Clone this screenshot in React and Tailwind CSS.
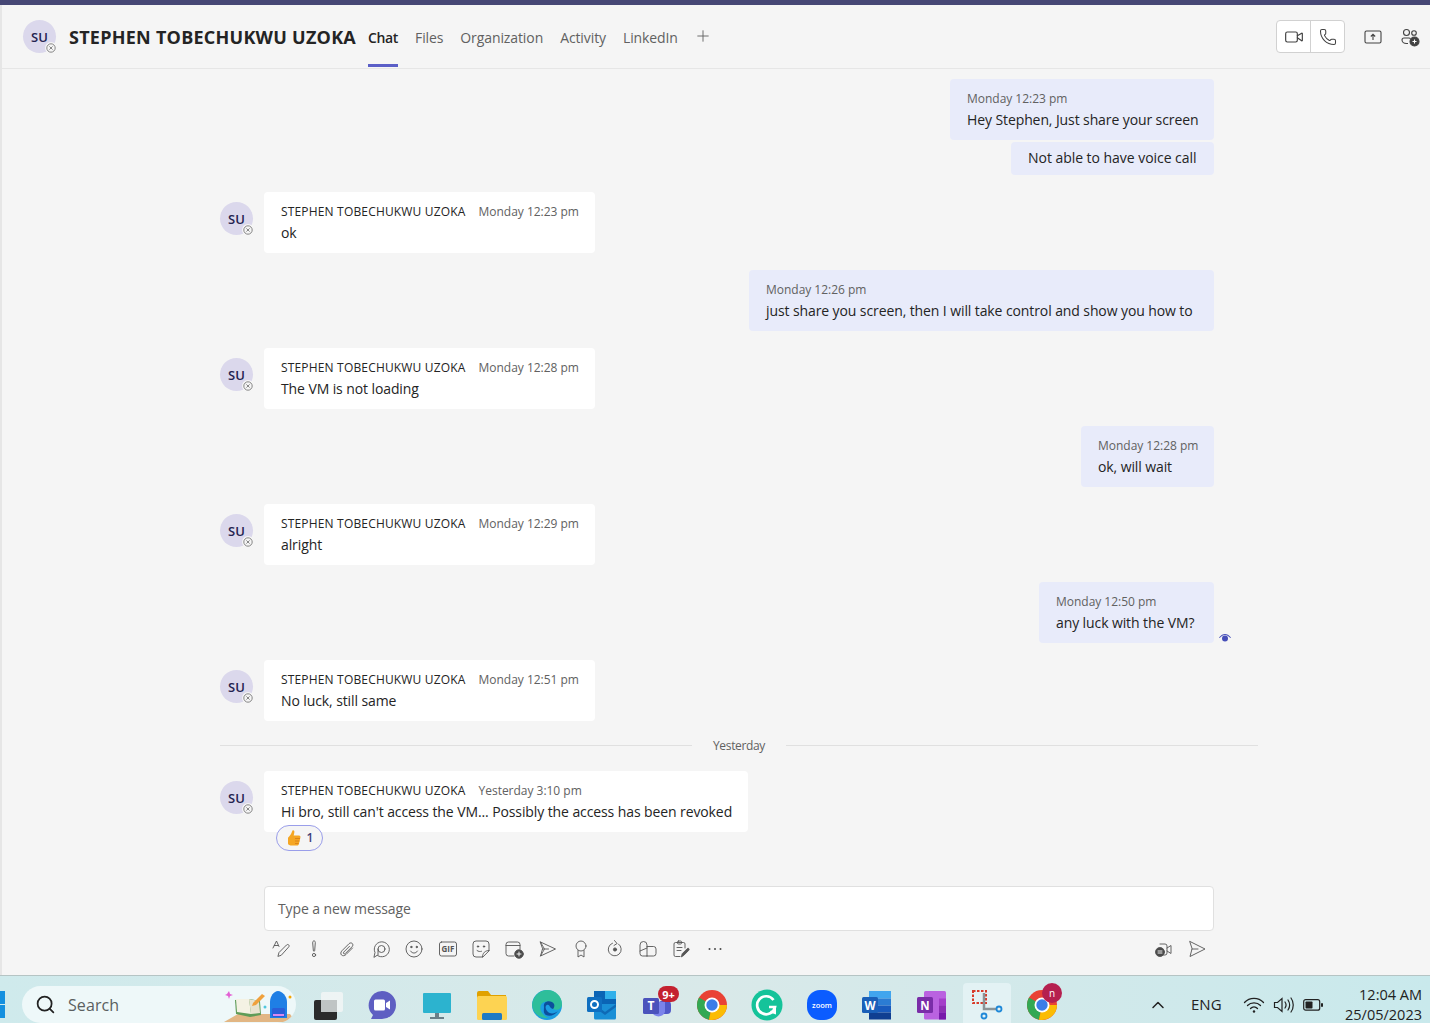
import React from "react";
import { Plus, Search, ChevronUp, Video, Phone } from "lucide-react";

const FONT = "font-['Open_Sans','Noto_Sans',sans-serif]";

const chatLog = [
  { me: true, width: "w-[264px]", time: "Monday 12:23 pm", text: "Hey Stephen, Just share your screen", extra: "Not able to have voice call" },
  { time: "Monday 12:23 pm", text: "ok" },
  { me: true, width: "w-[465px]", time: "Monday 12:26 pm", text: "just share you screen, then I will take control and show you how to" },
  { time: "Monday 12:28 pm", text: "The VM is not loading" },
  { me: true, width: "w-[133px]", time: "Monday 12:28 pm", text: "ok, will wait" },
  { time: "Monday 12:29 pm", text: "alright" },
  { me: true, width: "w-[175px]", time: "Monday 12:50 pm", text: "any luck with the VM?", seen: true },
  { time: "Monday 12:51 pm", text: "No luck, still same" },
];

// little wrapper so all the outline icons share the same stroke
function Ico({ size = 20, children, className = "" }) {
  return (
    <svg width={size} height={size} viewBox="0 0 20 20" fill="none" stroke="#555" strokeWidth="0.9" strokeLinecap="round" strokeLinejoin="round" className={className}>
      {children}
    </svg>
  );
}

function Avatar() {
  return (
    <div className="relative flex h-[33px] w-[33px] shrink-0 items-center justify-center rounded-full bg-[#dbd8ec] pt-[2px] text-[13px] font-semibold text-[#252350]">
      SU
      <span className="absolute -bottom-[1px] -right-[1px] flex h-[12px] w-[12px] items-center justify-center rounded-full bg-[#f5f5f5]">
        <svg width="10" height="10" viewBox="0 0 10 10" fill="none" stroke="#7a7a7a" strokeWidth="0.9">
          <circle cx="5" cy="5" r="4.2" />
          <path d="M3.4 3.4l3.2 3.2M6.6 3.4l-3.2 3.2" />
        </svg>
      </span>
    </div>
  );
}

function Meta({ time }) {
  return <div className="whitespace-nowrap text-[12px] leading-[20px] tracking-[-0.02px] text-[#616161]">{time}</div>;
}

function MineMessage({ msg }) {
  return (
    <div className="flex flex-col items-end gap-[2px] pr-[44px]">
      <div className={`relative rounded-[4px] bg-[#e8ebfa] pl-[17px] pt-[10px] pb-[9px] ${msg.width}`}>
        <Meta time={msg.time} />
        <div className="whitespace-nowrap text-[14px] leading-[22px] tracking-[-0.1px] text-[#242424]">{msg.text}</div>
        {msg.seen && (
          <svg width="14" height="10" viewBox="0 0 14 10" className="absolute -right-[18px] bottom-0" fill="#464eb8">
            <path d="M1 4.500C3 2 5 1 7 1s4 1 6 3.500l-.7.5C10.500 3 8.800 2 7 2S3.500 3 1.700 5z" />
            <circle cx="7" cy="5.500" r="3" />
          </svg>
        )}
      </div>
      {msg.extra && (
        <div className="w-[203px] rounded-[4px] bg-[#e8ebfa] pl-[17px] pt-[4px] pb-[6px] text-[14px] leading-[23px] tracking-[-0.04px] text-[#242424]">{msg.extra}</div>
      )}
    </div>
  );
}

function TheirMessage({ msg, reaction }) {
  return (
    <div className="flex gap-[11px]">
      <div className="pt-[10px]">
        <Avatar />
      </div>
      <div className="relative rounded-[4px] bg-white pl-[17px] pr-[16px] pt-[10px] pb-[9px]">
        <div className="flex gap-[13px]">
          <div className="whitespace-nowrap text-[12px] font-medium leading-[20px] tracking-[0.17px] text-[#242424]">STEPHEN TOBECHUKWU UZOKA</div>
          <Meta time={msg.time} />
        </div>
        <div className="whitespace-nowrap text-[14px] leading-[22px] tracking-[-0.1px] text-[#242424]">{msg.text}</div>
        {reaction && (
          <div className="absolute -bottom-[19px] left-[12px] flex h-[26px] w-[47px] items-center justify-center gap-[5px] rounded-full border border-[#9a9eea] bg-[#f5f5f5]">
            <svg width="16" height="18" viewBox="0 0 16 18">
              <path d="M6.500 1.500c1.500-.6 2.200.8 1.800 2.300L7.700 6.500h5.300c1.200 0 1.700 1 1.400 2l-1.500 6.500c-.3 1-1 1.500-2 1.500H6c-2 0-4-.5-4-2V9c0-1 2-2 3-4z" fill="#f5a623" />
              <path d="M9 9.500h5M9 12h4.500M9 14.500h3.500" stroke="#d97f1a" strokeWidth="0.9" />
            </svg>
            <span className="text-[12px] font-semibold text-[#3d3e78]">1</span>
          </div>
        )}
      </div>
    </div>
  );
}

function ComposeTools() {
  const tools = [
    <Ico key="f"><path d="M2 9L5.500 2 8 7.500M3.300 6.500h3.500" /><path d="M7 17l1-3.500 7.500-7.500c.7-.7 1.800-.7 2.300 0s.4 1.500-.3 2.200L10.500 16z" /></Ico>,
    <Ico key="i"><path d="M8.700 3.500c0-1 .6-1.700 1.300-1.700s1.300.7 1.300 1.700L10.700 11.500c0 .5-.3.800-.7.800s-.7-.3-.7-.8z" /><circle cx="10" cy="16" r="1.600" /></Ico>,
    <Ico key="a"><path d="M15.500 9l-6.500 6.500c-1.500 1.500-3.500 1.500-4.500.5s-1-2.800.5-4.300l7-7c1-1 2.500-1 3.300-.2s.8 2.200-.2 3.200l-6.800 6.800c-.5.500-1.200.500-1.600.1s-.4-1.100.1-1.600l5.700-5.700" /></Ico>,
    <Ico key="l"><path d="M3 18l1-4.500A7.500 7.500 0 1 1 6.500 16.500z" /><circle cx="10.500" cy="10" r="3.500" /><path d="M7 10v6" /></Ico>,
    <Ico key="e"><circle cx="10" cy="10" r="8" /><circle cx="7.300" cy="8" r="0.7" fill="#555" /><circle cx="12.700" cy="8" r="0.7" fill="#555" /><path d="M6.500 12c1 1.500 2.200 2 3.500 2s2.500-.5 3.500-2" /></Ico>,
    <Ico key="g">
      <rect x="1.500" y="3" width="17" height="14" rx="2" />
      <text x="10" y="13" textAnchor="middle" fontSize="8" fontWeight="700" fill="#555" stroke="none" fontFamily="Open Sans">GIF</text>
    </Ico>,
    <Ico key="s"><path d="M11.500 18H5a3 3 0 0 1-3-3V5a3 3 0 0 1 3-3h10a3 3 0 0 1 3 3v6.500z" /><path d="M11.500 18c0-4 2.500-6.500 6.500-6.500" /><circle cx="7" cy="7.500" r="0.7" fill="#555" /><circle cx="13" cy="7.500" r="0.7" fill="#555" /><path d="M6 11.500c1.500 1.200 3 1.200 4.500.8" /></Ico>,
    <Ico key="c">
      <path d="M10 17H4.500A2.500 2.500 0 0 1 2 14.500v-9A2.500 2.500 0 0 1 4.500 3h9A2.500 2.500 0 0 1 16 5.500V10M2 6.500h14" />
      <circle cx="15" cy="15" r="4.300" fill="#4a4a4a" />
      <path d="M15 13v4M13 15h4" stroke="#fff" />
    </Ico>,
    <Ico key="m"><path d="M2.500 3l15 7-15 7 2-7zM4.500 10h6" /><path d="M2.500 3l4 7-4 7" strokeWidth="0.8" /></Ico>,
    <Ico key="p"><circle cx="10" cy="7" r="5" /><path d="M7 11.500V18l3-2 3 2v-6.500" /></Ico>,
    <Ico key="r"><path d="M13.500 5A6.500 6.500 0 1 1 7.500 4.200" /><path d="M9.500 1.500L12 4.500 9 6.500" /><circle cx="10" cy="10.500" r="1.600" fill="#555" /></Ico>,
    <Ico key="o"><path d="M9 17H4.500A2.500 2.500 0 0 1 2 14.500V6a3.500 3.500 0 0 1 7 0v11M9 7.500h6.500A2.500 2.500 0 0 1 18 10v4.500a2.500 2.500 0 0 1-2.500 2.500H9" /><path d="M2 12l7-3" /></Ico>,
    <Ico key="u"><path d="M14 9V5a1.500 1.500 0 0 0-1.500-1.500h-8A1.500 1.500 0 0 0 3 5v11a1.500 1.500 0 0 0 1.500 1.500H9" /><rect x="6.500" y="2" width="4" height="3" rx="1" /><path d="M6 8.500h5M6 11.500h4" /><path d="M10.500 17.500l.7-2.800 5-5c.5-.5 1.300-.5 1.700 0s.3 1.200-.2 1.700l-5 5z" fill="#555" /></Ico>,
    <Ico key="d"><circle cx="4.500" cy="10" r="1" fill="#4a4a4a" stroke="none" /><circle cx="10" cy="10" r="1" fill="#4a4a4a" stroke="none" /><circle cx="15.500" cy="10" r="1" fill="#4a4a4a" stroke="none" /></Ico>,
  ];
  return (
    <div className="mt-[8px] flex h-[20px] items-center pr-[7px]">
      {tools.map((t, i) => (
        <div key={i} className="flex w-[33.400px] justify-center">{t}</div>
      ))}
      <div className="ml-auto flex gap-[13px]">
        <Ico>
          <path d="M6 5h5a2 2 0 0 1 2 2v7a2 2 0 0 1-2 2H6M13 9l4-2.500v8L13 12" />
          <circle cx="6" cy="13" r="4.500" fill="#4a4a4a" />
          <path d="M4 12h4M4 14h4" stroke="#fff" />
        </Ico>
        <Ico><path d="M3 2.500L18 10 3 17.500l2-7.500zM5 10h6" /></Ico>
      </div>
    </div>
  );
}

// taskbar pictures, all approximated with plain shapes
function BarIcon({ children, width = 32, height = 32, view = "0 0 32 32" }) {
  return <svg width={width} height={height} viewBox={view}>{children}</svg>;
}

function Chrome() {
  return (
    <>
      <circle cx="16" cy="16" r="15" fill="#e94235" />
      <path d="M16 16L3 8.500A15 15 0 0 0 13 30.700z" fill="#34a853" />
      <path d="M16 16h15a15 15 0 0 1-18 14.700z" fill="#fbbc04" />
      <circle cx="16" cy="16" r="7.500" fill="#fff" />
      <circle cx="16" cy="16" r="5.700" fill="#3b7de8" />
    </>
  );
}

const taskbarIcons = [
  <BarIcon key="tv">
    <rect x="3" y="11" width="23" height="20" rx="2" fill="#2b2b2b" />
    <rect x="10" y="3" width="22" height="20" rx="2" fill="#f4f6f6" fillOpacity="0.8" />
    <rect x="10" y="11" width="16" height="12" fill="#bfc4c4" />
  </BarIcon>,
  <BarIcon key="meet">
    <path d="M16 2a14 14 0 0 1 0 28H5l2-4A14 14 0 0 1 16 2z" fill="#5e5fc2" />
    <rect x="8" y="10.500" width="11" height="11" rx="1.500" fill="#fff" />
    <path d="M20 14l4-2.500v9L20 18z" fill="#fff" />
  </BarIcon>,
  <BarIcon key="mon">
    <rect x="2" y="4" width="28" height="20" rx="1" fill="#2cb3cf" />
    <rect x="14" y="24" width="4" height="4" fill="#6a7f88" />
    <rect x="9" y="28" width="14" height="2" fill="#6a7f88" />
  </BarIcon>,
  <BarIcon key="files">
    <path d="M1 4a2 2 0 0 1 2-2h9l3 4h15v8H1z" fill="#e0a100" />
    <rect x="1" y="7" width="30" height="24" rx="1.500" fill="#fdd352" />
    <rect x="6" y="24" width="20" height="7" rx="1.500" fill="#1f7ac4" />
  </BarIcon>,
  <BarIcon key="edge">
    <circle cx="16" cy="16" r="15" fill="#1b9de2" />
    <path d="M1 16C2 6 10 1 16 1c8 0 15 6 15 14 0 5-5 7-9 5-3-2 0-6-5-7-6-1-9 4-7 9 1 3 4 6 8 7C8 30 2 24 1 16z" fill="#31c48d" fillOpacity="0.85" />
    <path d="M13 18c-1-5 4-7 8-5 3 1.500 3 5 1 7-4-1-3-5-6-4-2 .5-2 4 1 7 2 2 7 2 10-1-3 4-8 6-12 4-3-2-2-5-2-8z" fill="#0c4f9c" />
  </BarIcon>,
  <BarIcon key="out">
    <rect x="8" y="2" width="22" height="15" fill="#0a64b5" />
    <rect x="19" y="2" width="11" height="8" fill="#31b0ea" />
    <path d="M8 15h22v14a1.500 1.500 0 0 1-1.500 1.500h-19A1.500 1.500 0 0 1 8 29z" fill="#1a8fd6" />
    <path d="M8 15l11 8 11-8v3l-11 8-11-8z" fill="#0f6ab5" />
    <rect x="1" y="8" width="15" height="15" rx="1.500" fill="#0f6fc0" />
    <circle cx="8.500" cy="15.500" r="3.500" fill="none" stroke="#fff" strokeWidth="2" />
  </BarIcon>,
  <BarIcon key="teams">
    <circle cx="26" cy="12" r="3.500" fill="#5059c9" />
    <rect x="17" y="12" width="13" height="13" rx="4" fill="#5059c9" />
    <path d="M11 13h13v10a7 7 0 0 1-13 0z" fill="#7b83eb" />
    <rect x="2" y="9" width="16" height="16" rx="1.500" fill="#4b53bc" />
    <text x="10" y="21" textAnchor="middle" fill="#fff" fontSize="12" fontWeight="700" fontFamily="Open Sans">T</text>
  </BarIcon>,
  <BarIcon key="chrome"><Chrome /></BarIcon>,
  <BarIcon key="gram">
    <circle cx="16" cy="16" r="15.500" fill="#15c39a" />
    <path d="M22.500 11A9 9 0 1 0 24 18h-6" fill="none" stroke="#fff" strokeWidth="2.700" />
    <path d="M19.500 22.500L24 24v-5" fill="none" stroke="#fff" strokeWidth="2" />
  </BarIcon>,
  <BarIcon key="zoom">
    <rect x="1" y="1" width="30" height="30" rx="13" fill="#0b5cff" />
    <text x="16" y="19" textAnchor="middle" fill="#fff" fontSize="7.500" fontWeight="600" fontFamily="Open Sans">zoom</text>
  </BarIcon>,
  <BarIcon key="word">
    <rect x="8" y="2" width="22" height="7.500" fill="#41a5ee" />
    <rect x="8" y="9.500" width="22" height="7" fill="#2b7cd3" />
    <rect x="8" y="16.500" width="22" height="7" fill="#185abd" />
    <rect x="8" y="23.500" width="22" height="7" fill="#103f91" />
    <rect x="1" y="8" width="16" height="16" rx="1.500" fill="#1a5fb8" />
    <text x="9" y="20.500" textAnchor="middle" fill="#fff" fontSize="11.500" fontWeight="700" fontFamily="Open Sans">W</text>
  </BarIcon>,
  <BarIcon key="note">
    <rect x="8" y="2" width="22" height="28.500" rx="1.500" fill="#ba62e0" />
    <rect x="23" y="9.500" width="7" height="7" fill="#a43fc9" />
    <rect x="23" y="16.500" width="7" height="7" fill="#8c2fb3" />
    <rect x="23" y="23.500" width="7" height="7" fill="#7719aa" />
    <rect x="1" y="8" width="16" height="16" rx="1.500" fill="#7a2da8" />
    <text x="9" y="20.500" textAnchor="middle" fill="#fff" fontSize="11.500" fontWeight="700" fontFamily="Open Sans">N</text>
  </BarIcon>,
];

function Taskbar() {
  return (
    <div className="flex h-[48px] shrink-0 items-center border-t border-[#b5c4c4] bg-gradient-to-r from-[#cfeaec] via-[#d9e9e9] to-[#c9e9ec] font-['Open_Sans',sans-serif]">
      <div className="grid h-[27px] w-[5px] translate-y-[5px] grid-cols-1 gap-[1px]">
        <div className="bg-[#1490df]" />
        <div className="bg-[#1490df]" />
      </div>
      <div className="relative ml-[17px] flex h-[37px] w-[274px] shrink-0 translate-y-[5px] items-center overflow-hidden rounded-full bg-[#eef8f9] pl-[13px]">
        <Search size={21} strokeWidth={2} className="text-[#222]" />
        <span className="ml-[12px] text-[16px] tracking-[0.1px] text-[#5a5f60]">Search</span>
        <svg width="72" height="37" viewBox="0 0 72 37" className="absolute right-0 top-0">
          <path d="M0 36l14-8h52l6 8z" fill="#e2b684" />
          <path d="M11 14l15-1 10 2 1 14-11 2-14-3z" fill="#5f9c58" />
          <path d="M12 13l13 0 2 15-14-2z" fill="#f4f2e4" />
          <path d="M25 13l10 2 1 12-9 1z" fill="#e8e4d0" />
          <path d="M29 17l9-9 3 2-9 9-4 1z" fill="#f0a13c" />
          <path d="M3 8l2-3 1 3 3 1-3 1-1 3-1-3-3-1z" fill="#e35fd4" />
          <path d="M46 32V16c0-6 4-11 8-11s9 5 9 11v16z" fill="#1f7fe5" />
          <rect x="48" y="22" width="13" height="9" rx="1.500" fill="#2a5ed8" />
          <rect x="49" y="28" width="11" height="2" fill="#d989f0" />
          <circle cx="66" cy="11" r="1.500" fill="#f5a500" />
          <circle cx="41" cy="21" r="1.500" fill="#4fc7de" />
        </svg>
      </div>
      <div className="ml-[3px] flex translate-y-[5px]">
        {taskbarIcons.map((ic, i) => (
          <div key={i} className="relative flex w-[55px] shrink-0 items-center justify-center">
            {ic}
            {i === 6 && (
              <span className="absolute top-[3px] left-[29px] flex h-[16px] w-[21px] items-center justify-center rounded-full bg-[#c4212f] text-[11px] font-bold leading-none text-white">9+</span>
            )}
          </div>
        ))}
        <div className="relative mx-[3.500px] flex h-[43px] w-[48px] shrink-0 items-center justify-center rounded-t-[4px] bg-[#e3f2f4]">
          <svg width="32" height="32" viewBox="0 0 32 32" fill="none">
            <rect x="2" y="2" width="13" height="12" stroke="#d83b2a" strokeWidth="2" strokeDasharray="2.500 1.500" />
            <path d="M13 4v16h12" stroke="#8b9496" strokeWidth="2.500" />
            <circle cx="13" cy="27" r="2.500" stroke="#1e88d8" strokeWidth="1.800" />
            <circle cx="28" cy="20" r="2.500" stroke="#1e88d8" strokeWidth="1.800" />
          </svg>
        </div>
        <div className="relative flex w-[55px] shrink-0 items-center justify-center">
          <BarIcon><Chrome /></BarIcon>
          <span className="absolute top-0 left-[28px] flex h-[20px] w-[20px] items-center justify-center rounded-full bg-[#b5204f] text-[10px] text-white">n</span>
        </div>
      </div>
      <div className="ml-[79px] flex translate-y-[5px] items-center">
        <ChevronUp size={20} strokeWidth={1.800} className="text-[#222]" />
        <span className="ml-[23px] text-[15px] text-[#222]">ENG</span>
        <svg width="22" height="18" viewBox="0 0 22 18" fill="none" stroke="#222" strokeWidth="1.300" strokeLinecap="round" className="ml-[21px]">
          <path d="M1.500 6.500c5-5.500 14-5.500 19 0M4.500 9.500c3.500-3.500 9.500-3.500 13 0M7.500 12.500c2-2 5-2 7 0" />
          <circle cx="11" cy="15.500" r="1.200" fill="#222" stroke="none" />
        </svg>
        <svg width="22" height="18" viewBox="0 0 22 18" fill="none" stroke="#222" strokeWidth="1.200" strokeLinecap="round" className="ml-[8px]">
          <path d="M1.500 6.500h3l4.500-4v13l-4.500-4h-3z" />
          <path d="M12 6c1.300 1.800 1.300 4.200 0 6M15 4c2 3 2 7 0 10M18 2c3 4 3 10 0 14" />
        </svg>
        <svg width="20" height="14" viewBox="0 0 20 14" fill="none" className="ml-[8px]">
          <rect x="0.700" y="1.700" width="16" height="10.500" rx="2" stroke="#222" strokeWidth="1.200" />
          <rect x="2.500" y="3.500" width="7" height="7" rx="0.800" fill="#222" />
          <rect x="18" y="5" width="2" height="4" rx="1" fill="#222" />
        </svg>
      </div>
      <div className="ml-auto mr-[8px] translate-y-[5px] text-right text-[14.500px] leading-[20px] text-[#222]">
        <div>12:04 AM</div>
        <div>25/05/2023</div>
      </div>
    </div>
  );
}

export default function App() {
  return (
    <div className={`flex h-screen w-full flex-col overflow-hidden bg-[#f5f5f5] ${FONT}`}>
      <div className="h-[5px] shrink-0 bg-[#464775]" />
      <div className="flex min-h-0 flex-1 flex-col border-l-2 border-[#e6e6e6]">
        <header className="flex h-[64px] shrink-0 items-center border-b border-[#e6e6e6] pl-[21px] pr-[10px]">
          <Avatar />
          <h1 className="ml-[13px] w-[287px] whitespace-nowrap text-[18px] font-bold leading-none tracking-[0.25px] text-[#242424]">STEPHEN TOBECHUKWU UZOKA</h1>
          <nav className="ml-[12px] flex h-full items-center gap-[17px] pt-[1px] text-[14px] tracking-[-0.1px] text-[#616161]">
            <a className="relative flex h-full items-center font-semibold tracking-[-0.36px] text-[#242424]">
              Chat
              <span className="absolute bottom-[1px] left-0 right-0 h-[3px] bg-[#5b5fc7]" />
            </a>
            <a>Files</a>
            <a>Organization</a>
            <a>Activity</a>
            <a>LinkedIn</a>
            <Plus size={18} strokeWidth={1.200} className="-ml-[1px] -translate-y-[1px] text-[#616161]" />
          </nav>
          <div className="ml-auto flex h-[33px] items-center rounded-[4px] border border-[#d1d1d1] bg-white">
            <div className="flex h-full w-[34px] items-center justify-center border-r border-[#d1d1d1]">
              <Video size={20} strokeWidth={1.400} className="text-[#424242]" />
            </div>
            <div className="flex h-full w-[33px] items-center justify-center">
              <Phone size={18} strokeWidth={1.400} className="text-[#424242]" />
            </div>
          </div>
          <svg width="20" height="20" viewBox="0 0 20 20" fill="none" stroke="#424242" strokeWidth="1.100" className="ml-[18px]">
            <rect x="2" y="4" width="16" height="12" rx="1.500" />
            <path d="M10 13V7.500M7.800 9.500L10 7.300l2.200 2.200" />
          </svg>
          <svg width="20" height="20" viewBox="0 0 20 20" fill="none" stroke="#424242" strokeWidth="1.100" className="ml-[17px]">
            <circle cx="6.500" cy="5.500" r="3" />
            <circle cx="14" cy="6" r="2.300" />
            <path d="M2 13a2 2 0 0 1 2-2h5a2 2 0 0 1 1.500.7M2 13c0 2 2 3.500 4.500 3.500H8" />
            <circle cx="14.500" cy="14.500" r="4.500" fill="#424242" />
            <path d="M14.500 12.500v4M12.500 14.500h4" stroke="#fff" />
          </svg>
        </header>

        <main className="flex min-h-0 flex-1 flex-col pl-[218px] pt-[10px]">
          <div className="flex w-[1038px] flex-col gap-[17px]">
            {chatLog.map((msg, i) => (msg.me ? <MineMessage key={i} msg={msg} /> : <TheirMessage key={i} msg={msg} />))}
          </div>

          <div className="mt-[14px] flex h-[20px] w-[1038px] items-center">
            <div className="h-px flex-1 bg-[#e0e0e0]" />
            <span className="translate-y-[1px] px-[21px] text-[12px] tracking-[-0.35px] text-[#616161]">Yesterday</span>
            <div className="h-px flex-1 bg-[#e0e0e0]" />
          </div>

          <div className="mt-[16px]">
            <TheirMessage reaction msg={{ time: "Yesterday 3:10 pm", text: "Hi bro, still can't access the VM... Possibly the access has been revoked" }} />
          </div>

          <div className="ml-[44px] mt-[54px] w-[950px]">
            <div className="flex h-[45px] items-center rounded-[4px] border border-[#e0e0e0] bg-white px-[13px] pb-[1px] text-[14px] tracking-[-0.1px] text-[#616161]">
              Type a new message
            </div>
            <ComposeTools />
          </div>
        </main>
      </div>
      <Taskbar />
    </div>
  );
}
